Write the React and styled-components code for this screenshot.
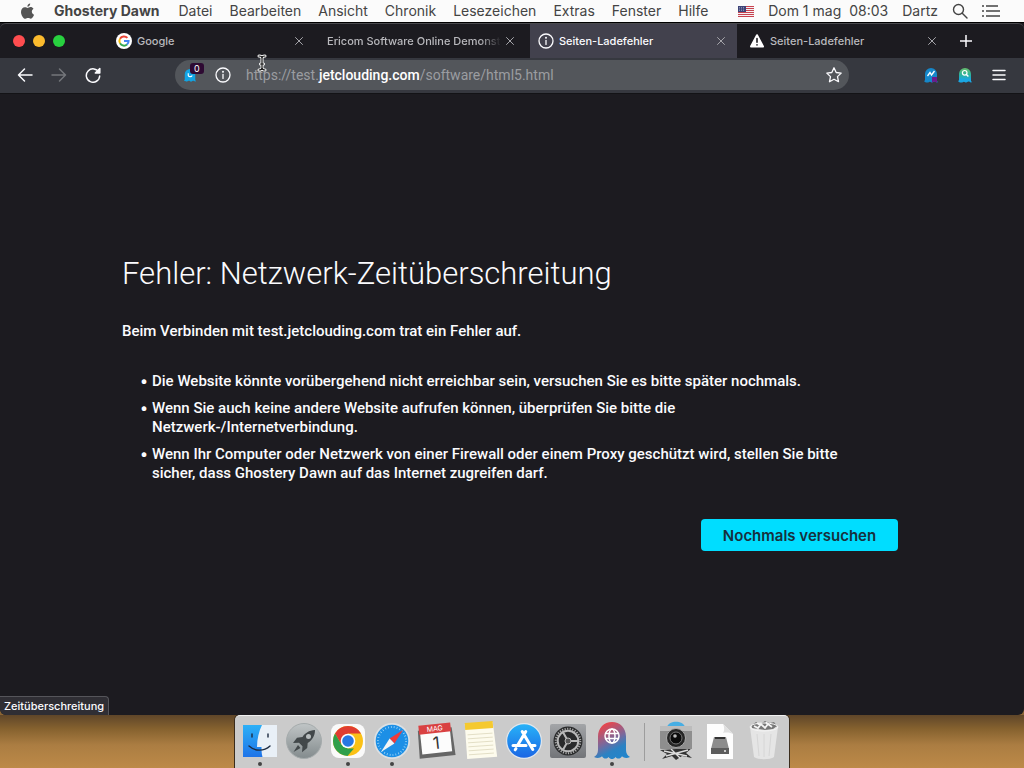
import React from "react";
import styled, { createGlobalStyle } from "styled-components";

const Global = createGlobalStyle`
  * { box-sizing: border-box; }
  body { margin: 0; background: #8a6434; font-family: Inter, "Liberation Sans", sans-serif; }
  button, input { font: inherit; color: inherit; }
  button { background: none; border: 0; padding: 0; display: flex; align-items: center; justify-content: center; cursor: pointer; }
  svg { display: block; flex: none; }
`;

const Desktop = styled.div`
  min-height: 100vh;
  display: flex;
  flex-direction: column;
`;

const MenuBar = styled.header`
  height: 22px;
  padding: 0 24px 0 20px;
  display: flex;
  align-items: center;
  justify-content: space-between;
  background: #fbfbfb;
  color: #444;
  font-size: 14px;
  line-height: 20px;
  white-space: nowrap;
`;

const MenuGroup = styled.nav`
  display: flex;
  align-items: center;
  gap: ${(p) => p.$gap}px;
`;

const MenuItem = styled.button`
  && { font-weight: ${(p) => (p.$bold ? 700 : 400)}; }
`;

const Browser = styled.main`
  position: relative;
  flex: 1;
  display: flex;
  flex-direction: column;
  border-top: 1px solid #000;
  border-radius: 0 0 6px 6px;
  background: #1c1b20;
  color: #fbfbfe;
`;

const TabStrip = styled.div`
  height: 35px;
  display: flex;
  align-items: stretch;
  border-top: 1px solid #4a4a4e;
  border-radius: 6px 6px 0 0;
`;

const TrafficLights = styled.div`
  width: 107px;
  flex: none;
  padding-left: 13px;
  display: flex;
  align-items: center;
  gap: 8px;
`;

const Light = styled.button`
  && { width: 12px; height: 12px; border-radius: 50%; background: ${(p) => p.$color}; }
`;

const Tab = styled.div`
  flex: 0 1 207px;
  min-width: 0;
  margin: 0 3px 0 1px;
  padding: 0 12px 0 8px;
  display: flex;
  align-items: center;
  gap: 5px;
  font-size: 11px;
  font-weight: 500;
  color: ${(p) => (p.$active ? "#fbfbfe" : "#b9b9bd")};
  background: ${(p) => (p.$active ? "#42414d" : "transparent")};
`;

const TabTitle = styled.span`
  flex: 1;
  overflow: hidden;
  white-space: nowrap;
  mask-image: ${(p) => (p.$fade ? "linear-gradient(90deg, #000 88%, transparent)" : "none")};
`;

const TabClose = styled.button`
  && { color: #a5a5aa; }
`;

const NewTab = styled.button`
  width: 30px;
`;

const Toolbar = styled.div`
  height: 35px;
  padding: 0 17px 1px;
  display: flex;
  align-items: center;
  background: #36383f;
`;

const NavButtons = styled.div`
  width: 158px;
  flex: none;
  display: flex;
  align-items: center;
  gap: 18px;
`;

const NavButton = styled.button`
  && { color: ${(p) => (p.disabled ? "#74767b" : "#fbfbfe")}; }
`;

const AddressBar = styled.div`
  flex: 1;
  height: 30px;
  padding: 0 7px 0 5px;
  display: flex;
  align-items: center;
  gap: 15px;
  border-radius: 15px;
  background: #53565b;
`;

const Shield = styled.button`
  position: relative;
  width: 20px;
  height: 30px;
`;

const Badge = styled.span`
  position: absolute;
  left: 10px;
  top: 3px;
  padding: 0 4px;
  border-radius: 3px;
  background: #2e0a33;
  color: #fff;
  font-size: 9px;
  line-height: 11px;
`;

const UrlField = styled.label`
  flex: 1;
  display: grid;
  align-items: center;
  font-family: Roboto, Inter, sans-serif;
  font-size: 14px;
  line-height: 20px;
  > * { grid-area: 1 / 1; }
`;

const UrlInput = styled.input`
  && { color: transparent; caret-color: #fff; }
  width: 100%;
  border: 0;
  padding: 0;
  outline: 0;
  background: none;
`;

const UrlText = styled.span`
  pointer-events: none;
  color: #9b9da1;
  b { color: #fff; font-weight: 500; }
`;

const Extensions = styled.div`
  width: 158px;
  flex: none;
  display: flex;
  align-items: center;
  justify-content: flex-end;
  gap: 18px;
`;

const Page = styled.section`
  flex: 1;
  display: flex;
  flex-direction: column;
  justify-content: center;
  padding: 24px 126px 28px 122px;
  border-top: 1px solid #131316;
  font-family: Roboto, Inter, sans-serif;
  font-size: 15px;
  font-weight: 500;
  line-height: 19px;
`;

const Title = styled.h1`
  margin: 0 0 28px;
  font-size: 31px;
  font-weight: 300;
  line-height: 40px;
`;

const Lead = styled.p`
  margin: 0 0 30px;
`;

const Hints = styled.ul`
  margin: 0 0 36px;
  padding: 0 30px;
  display: grid;
  gap: 7px;
  list-style-type: "•\\00a0";
  li::marker { font-family: Inter, sans-serif; }
`;

const Retry = styled.button`
  && {
    align-self: flex-end;
    width: 197px;
    height: 32px;
    border-radius: 4px;
    background: #00ddff;
    color: #17303d;
    font-family: Inter, sans-serif;
    font-weight: 600;
  }
`;

const Status = styled.output`
  position: absolute;
  left: 0;
  bottom: 0;
  padding: 0 4px;
  border: 1px solid #55555a;
  border-width: 1px 1px 0 0;
  border-radius: 0 4px 0 6px;
  background: #2f2e34;
  font-size: 11px;
  font-weight: 500;
  line-height: 18px;
`;

const Pointer = styled.svg`
  position: absolute;
  left: 256px;
  top: 31px;
  pointer-events: none;
`;

const Shelf = styled.footer`
  display: flex;
  justify-content: center;
  background: linear-gradient(#5f4629, #86622f 14px, #ab7d42 30px, #bd8a48);
`;

const DockBar = styled.div`
  height: 53px;
  padding: 7px 7px 0;
  display: flex;
  gap: 8px;
  border-top: 1px solid #f1f1f1;
  border-radius: 5px 5px 0 0;
  background: #cbcbcb;
  box-shadow: 0 0 0 1px #3a2c1c;
`;

const DockItem = styled.button`
  && { width: 36px; flex-direction: column; justify-content: flex-start; gap: 3px; }
  svg { overflow: visible; }
`;

const Dot = styled.span`
  width: 4px;
  height: 4px;
  border-radius: 50%;
  background: #444;
`;

const Divider = styled.span`
  width: 1px;
  height: 38px;
  margin: 0 5px 0 6px;
  background: #9d9d9d;
`;

const Line = ({ size = 16, w = 1.5, children, ...rest }) => (
  <svg width={size} height={size} viewBox="0 0 16 16" fill="none" stroke="currentColor" strokeWidth={w} strokeLinecap="round" strokeLinejoin="round" {...rest}>
    {children}
  </svg>
);

const AppleLogo = () => (
  <svg width="15" height="17" viewBox="0 0 15 17" fill="#555">
    <path d="M10.2 0.6c.1 1.7-1.3 3.2-2.8 3.2C7.2 2.200 8.600.800 10.200.600z" />
    <path d="M7.600 4.900c.7 0 1.500-.8 2.900-.8 1.200 0 2.300.6 3 1.600-2.500 1.500-2 5 .6 6-.6 1.600-1.900 4-3.300 4-1 0-1.500-.6-2.700-.6s-1.700.6-2.700.6C3.300 15.700 1 12 1 8.900c0-3 1.900-4.700 3.800-4.700 1.300 0 2.100.7 2.800.7z" />
  </svg>
);

const Flag = () => (
  <svg width="16" height="11" viewBox="0 0 16 11">
    <path fill="#f4f0f2" d="M0 0h16v11H0z" />
    <path stroke="#c8424f" d="M0 .5h16M0 2.500h16M0 4.500h16M0 6.500h16M0 8.500h16M0 10.500h16" />
    <path fill="#3d4478" d="M0 0h8v6H0z" />
    <path stroke="#a8acc9" strokeDasharray="1 1" strokeWidth=".7" d="M1 1.500h6M1 3h6M1 4.500h6" />
  </svg>
);

const GoogleIcon = () => (
  <svg width="16" height="16" viewBox="0 0 16 16">
    <circle cx="8" cy="8" r="8" fill="#fff" />
    <g fill="none" strokeWidth="2">
      <path stroke="#ea4335" d="M4 5.700A4.600 4.600 0 0 1 11.400 4.900" />
      <path stroke="#fbbc05" d="M4 5.700a4.600 4.600 0 0 0 0 4.600" />
      <path stroke="#34a853" d="M4 10.300a4.600 4.600 0 0 0 7 1.200" />
      <path stroke="#4285f4" d="M8 8h4.600a4.600 4.600 0 0 1-1.600 3.500" />
    </g>
  </svg>
);

const InfoIcon = () => (
  <Line w="1.300"><circle cx="8" cy="8" r="7" /><path d="M8 7.400v4" /><circle cx="8" cy="4.800" r=".4" fill="currentColor" /></Line>
);

const WarnIcon = () => (
  <svg width="16" height="16" viewBox="0 0 16 16">
    <path fill="#fff" stroke="#fff" strokeWidth="2" strokeLinejoin="round" d="M8 2.200 14 13.500H2z" />
    <path stroke="#1c1b20" strokeWidth="1.600" strokeLinecap="round" d="M8 5.500v3.800M8 11.800v.1" />
  </svg>
);

const CloseIcon = () => <Line size={8} w="2"><path d="M1 1l14 14M15 1 1 15" /></Line>;

const GhostShape = "M2 14V7a6 6 0 0 1 12 0v7c1 .8 1 1.500 0 1.400-1.200-.1-1.600-.8-2.600-.8s-1.200 1-2.200 1-1.300-.9-2.300-.9-1.300.9-2.500.8c-1.300 0-1.700-.4-2.400-.6-.8-.2-1-.7 0-1.900z";

const InsightGhost = () => (
  <svg width="16" height="16" viewBox="0 0 16 16">
    <path fill="#1687c9" d={GhostShape} />
    <path fill="#6d1a8c" d="M9 10h5v5.400c-1.500 0-2-.8-3-.8s-1 .9-2 .9z" />
    <path fill="none" stroke="#fff" strokeWidth="1.300" d="M4.500 9 7 5.500 8.500 8 11.500 4" />
  </svg>
);

const SearchGhost = () => (
  <svg width="16" height="16" viewBox="0 0 16 16">
    <defs><linearGradient id="sg" x2="0" y2="1"><stop stopColor="#68bd6c" /><stop offset=".45" stopColor="#2db39a" /><stop offset=".8" stopColor="#1aa7e4" /></linearGradient></defs>
    <path fill="url(#sg)" d={GhostShape} />
    <circle cx="7.700" cy="5.800" r="2.300" fill="none" stroke="#fff" strokeWidth="1.200" />
    <path stroke="#fff" strokeWidth="1.400" d="m9.400 7.500 2 2" />
  </svg>
);

const ShieldGhost = () => (
  <svg width="14" height="16" viewBox="0 0 16 16">
    <path fill="#12a4e3" d={GhostShape} />
    <path fill="none" stroke="#fff" strokeWidth="1.300" d="M6 6v2.500a2.500 2.500 0 0 0 4.500 0" />
  </svg>
);

const Finder = () => (
  <svg width="36" height="36" viewBox="0 0 36 36">
    <defs><linearGradient id="fi" x2="0" y2="1"><stop stopColor="#2bb0f7" /><stop offset="1" stopColor="#1f74e8" /></linearGradient></defs>
    <path fill="url(#fi)" d="M1 2h34v32H1z" />
    <path fill="#e9f0f7" d="M20 2h15v32H20.500c-.8-3-1-6-1-10H15C15 16 17 8 20 2z" />
    <path fill="none" stroke="#1d2b40" strokeWidth="1.400" strokeLinecap="round" d="M10 11v3M26 11v3M7 23c6 5.500 15 5.500 21 0" />
  </svg>
);

const Launchpad = () => (
  <svg width="36" height="36" viewBox="0 0 36 36">
    <defs><linearGradient id="lp" x2="0" y2="1"><stop stopColor="#c0c5c6" /><stop offset="1" stopColor="#838b8d" /></linearGradient></defs>
    <circle cx="18" cy="18" r="17.500" fill="url(#lp)" stroke="#a5abac" />
    <path fill="#42484a" d="M29 7c-6 .4-10 3-12.500 7l-5.500.8L7 20l6-.2 3.500 3.400-.5 6 5.200-4.200.5-5C26 17.500 29 13 29 7zM12 22l-4.500 7L14.500 25z" />
    <circle cx="22.500" cy="13.500" r="2.500" fill="#b8bebf" />
  </svg>
);

const Chrome = () => (
  <svg width="36" height="36" viewBox="0 0 36 36">
    <rect x="1" y="1" width="34" height="34" rx="8" fill="#fafafa" />
    <circle cx="18" cy="18" r="15" fill="#fbc116" />
    <path fill="#e03c31" d="M5 10.500a15 15 0 0 1 26 0H18l-6.500 11.200z" />
    <path fill="#2f9f4b" d="M5 10.500 11.500 21.700 18 25.500h6L17.500 33A15 15 0 0 1 5 10.500z" />
    <circle cx="18" cy="18" r="7.300" fill="#fff" /><circle cx="18" cy="18" r="5.800" fill="#2877e3" />
  </svg>
);

const Safari = () => (
  <svg width="36" height="36" viewBox="0 0 36 36">
    <circle cx="18" cy="18" r="18" fill="#dce0e3" /><circle cx="18" cy="18" r="16.300" fill="#1c8fe6" />
    <circle cx="18" cy="18" r="14" fill="none" stroke="#a7dcfa" strokeWidth="2" strokeDasharray=".7 2.230" />
    <path fill="#ef3b3a" d="m29 7-8.600 13.400-4.800-4.800z" /><path fill="#f2f4f5" d="m7 29 13.400-8.600-4.800-4.800z" />
  </svg>
);

const DateText = styled.text`
  font-family: Inter, sans-serif;
  text-anchor: middle;
`;

const Calendar = () => (
  <svg width="36" height="36" viewBox="0 0 36 36">
    <g transform="rotate(-6 18 18)">
      <path fill="#666" d="M1 6h34l1 28H0z" />
      <path fill="#fcfcfc" d="M3 2h30v28H3z" /><path fill="#d94142" d="M2 1h32v9H2z" />
      <DateText x="18" y="8" fontSize="7" fill="#fff">MAG</DateText>
      <DateText x="18" y="26" fontSize="17" fill="#333">1</DateText>
    </g>
  </svg>
);

const Notes = () => (
  <svg width="36" height="36" viewBox="0 0 36 36">
    <g transform="rotate(-4 18 18)">
      <path fill="#fdfbed" d="M4 0h28l2 35H4z" /><path fill="#f5c92f" d="M4-1h28v7H4z" />
      <path stroke="#ddd8bd" strokeWidth=".8" d="M6 11h25M6 15h25M6 19h25M6 23h25M6 27h25M6 31h25" />
    </g>
  </svg>
);

const AppStore = () => (
  <svg width="36" height="36" viewBox="0 0 36 36">
    <defs><linearGradient id="as" x2="0" y2="1"><stop stopColor="#27b2f8" /><stop offset="1" stopColor="#1b66e4" /></linearGradient></defs>
    <circle cx="18" cy="18" r="18" fill="#e1e7ed" /><circle cx="18" cy="18" r="16.800" fill="url(#as)" />
    <path fill="none" stroke="#fff" strokeWidth="3" strokeLinecap="round" d="M19.800 8.500 11.500 22.500M16.200 8.500l10.600 18M7 22.500h13M26 22.500h3M10 25.500l-.8 1.300" />
  </svg>
);

const Settings = () => (
  <svg width="36" height="36" viewBox="0 0 36 36">
    <defs><linearGradient id="st" x2="0" y2="1"><stop stopColor="#a3a5a8" /><stop offset="1" stopColor="#727478" /></linearGradient></defs>
    <rect y="1" width="36" height="34" rx="2" fill="url(#st)" />
    <circle cx="18" cy="18" r="14.500" fill="#292a2b" />
    <circle cx="18" cy="18" r="12.300" fill="none" stroke="#aaa" strokeWidth="2" strokeDasharray="1.200 1.376" />
    <circle cx="18" cy="18" r="10.300" fill="none" stroke="#b8b8b8" strokeWidth="2" />
    <path fill="none" stroke="#b8b8b8" strokeWidth="2" d="M18 18h10M18 18l-5-8.700M18 18l-5 8.700" />
    <circle cx="18" cy="18" r="3" fill="#555" stroke="#b8b8b8" />
  </svg>
);

const Ghostery = () => (
  <svg width="36" height="36" viewBox="0 0 36 36">
    <defs><linearGradient id="gh" x1=".2" x2=".7" y2="1"><stop offset=".1" stopColor="#e5474f" /><stop offset=".5" stopColor="#7c689b" /><stop offset=".75" stopColor="#2b82c3" /><stop offset="1" stopColor="#2385cb" /></linearGradient></defs>
    <path fill="url(#gh)" d="M4 13.500C4 5 10-1 18-1s14 6 14 14.500V27c0 3.500 1.500 5.500 4 7-3.500 1.500-6 1-8-.8-1.500 2.600-4.500 3.200-6.500.8-2 2.800-5 2.800-7 0-2 2.400-5 1.800-6.500-.8-2 1.800-4.500 2.300-8 .8 2.500-1.500 4-3.500 4-7z" />
    <g fill="none" stroke="#fff" strokeWidth="1.500"><circle cx="18" cy="13" r="7" /><ellipse cx="18" cy="13" rx="3" ry="7" /><path d="M11.500 10.500h13M11.500 15.500h13" /></g>
  </svg>
);

const Camera = () => (
  <svg width="36" height="36" viewBox="0 0 36 36">
    <path fill="#46aee4" d="M9 4c2-7 16-7 18 0z" />
    <path fill="#333" d="m2 27 32-2-6 5 6 5-10-2-6 4-4-4-10 3 5-5z" />
    <path stroke="#ddd" strokeWidth="1.300" d="m6 28 23 5M30 27 8 33M13 26l9 9" />
    <rect x="2" y="3" width="32" height="23" rx="1" fill="#8e8e8e" /><path fill="#bcbcbc" d="M2 3h32v5H2z" />
    <circle cx="18" cy="15" r="9.500" fill="#262626" stroke="#aaa" /><circle cx="18" cy="15" r="6" fill="#0c0c0c" stroke="#777" /><circle cx="17" cy="13" r="1.800" fill="#bbb" />
  </svg>
);

const DiskFile = () => (
  <svg width="36" height="36" viewBox="0 0 36 36">
    <path fill="#fdfdfd" d="M5 1h16l10 10v25H5z" /><path fill="#e0e0e0" d="M21 1c2 4 1 8 0 9 4-1 8 0 10 1z" />
    <path fill="#8c8c8c" d="M12 14h12l3 12H9z" /><path fill="#5c5c5c" d="M9 25h18v6H9z" /><path fill="#333" d="M13 14h10v2H13z" />
    <circle cx="23" cy="28" r="1" fill="#eee" />
  </svg>
);

const Trash = () => (
  <svg width="36" height="36" viewBox="0 0 36 36">
    <path fill="#e8e8e8" fillOpacity=".9" d="M4 4h28l-4 30c-4 3-16 3-20 0z" />
    <path fill="#777" d="m6 2 4-3 4 2 5-3 5 2 4-1 3 4-4 3-8 1-7-1-6-1z" />
    <path stroke="#f4f4f4" strokeWidth="1.800" d="m8 3 4 2 3-4 4 4 3-4 4 3M11 0l3 2M20-1l2 3" fill="none" />
    <path stroke="#d6d6d6" d="m11 11 2 22M18 11v23M25 11l-2 22" />
    <ellipse cx="18" cy="4" rx="14" ry="4" fill="none" stroke="#f5f5f5" />
  </svg>
);

const MENUS = ["Datei", "Bearbeiten", "Ansicht", "Chronik", "Lesezeichen", "Extras", "Fenster", "Hilfe"];

const TABS = [
  { title: "Google", Icon: GoogleIcon },
  { title: "Ericom Software Online Demonstration", fade: true },
  { title: "Seiten-Ladefehler", Icon: InfoIcon, active: true },
  { title: "Seiten-Ladefehler", Icon: WarnIcon },
];

const HINTS = [
  "Die Website könnte vorübergehend nicht erreichbar sein, versuchen Sie es bitte später nochmals.",
  "Wenn Sie auch keine andere Website aufrufen können, überprüfen Sie bitte die Netzwerk-/Internetverbindung.",
  "Wenn Ihr Computer oder Netzwerk von einer Firewall oder einem Proxy geschützt wird, stellen Sie bitte sicher, dass Ghostery Dawn auf das Internet zugreifen darf.",
];

const APPS = [
  { name: "Finder", Icon: Finder, open: true },
  { name: "Launchpad", Icon: Launchpad },
  { name: "Chrome", Icon: Chrome, open: true },
  { name: "Safari", Icon: Safari, open: true },
  { name: "Kalender", Icon: Calendar },
  { name: "Notizen", Icon: Notes },
  { name: "App Store", Icon: AppStore },
  { name: "Einstellungen", Icon: Settings },
  { name: "Ghostery Dawn", Icon: Ghostery, open: true },
];

const TOOLS = [
  { name: "Bildschirmfoto", Icon: Camera },
  { name: "Image", Icon: DiskFile },
  { name: "Papierkorb", Icon: Trash },
];

const DockButton = ({ name, Icon, open }) => (
  <DockItem aria-label={name}><Icon />{open && <Dot />}</DockItem>
);

export default function App() {
  return (
    <Desktop>
      <Global />
      <MenuBar>
        <MenuGroup $gap={19}>
          <MenuItem aria-label="Apple"><AppleLogo /></MenuItem>
          <MenuItem $bold>Ghostery Dawn</MenuItem>
          <MenuGroup $gap={17}>
            {MENUS.map((m) => <MenuItem key={m}>{m}</MenuItem>)}
          </MenuGroup>
        </MenuGroup>
        <MenuGroup $gap={14}>
          <MenuItem aria-label="Tastatur"><Flag /></MenuItem>
          <MenuGroup $gap={8}><time>Dom 1 mag</time><time>08:03</time></MenuGroup>
          <MenuItem>Dartz</MenuItem>
          <MenuItem aria-label="Suchen"><Line w="1.400"><circle cx="6.500" cy="6.500" r="5" /><path d="m10.500 10.500 4.500 4.500" /></Line></MenuItem>
          <MenuItem aria-label="Mitteilungen">
            <svg width="18" height="12" viewBox="0 0 18 12" stroke="#444" strokeWidth="1.500"><path d="M0 1h2M0 6h2M0 11h2M4 1h12M4 6h14M4 11h14" /></svg>
          </MenuItem>
        </MenuGroup>
      </MenuBar>

      <Browser>
        <TabStrip>
          <TrafficLights>
            <Light $color="#ff4d4f" aria-label="Schließen" />
            <Light $color="#fcbb2d" aria-label="Minimieren" />
            <Light $color="#28d13f" aria-label="Maximieren" />
          </TrafficLights>
          {TABS.map(({ title, Icon, active, fade }, i) => (
            <Tab key={i} $active={active}>
              {Icon && <Icon />}
              <TabTitle $fade={fade}>{title}</TabTitle>
              <TabClose aria-label="Tab schließen"><CloseIcon /></TabClose>
            </Tab>
          ))}
          <NewTab aria-label="Neuer Tab"><Line size={12} w="2"><path d="M8 0v16M0 8h16" /></Line></NewTab>
        </TabStrip>

        <Toolbar>
          <NavButtons>
            <NavButton aria-label="Zurück"><Line><path d="M15 8H1.500M7.500 2 1.500 8l6 6" /></Line></NavButton>
            <NavButton disabled aria-label="Vor"><Line><path d="M1 8h13.500M8.500 2l6 6-6 6" /></Line></NavButton>
            <NavButton aria-label="Neu laden"><Line><path d="M14 5.500A6.700 6.700 0 1 0 14.700 9" /><path fill="currentColor" d="M14.800 1.500v4.500h-4.500z" /></Line></NavButton>
          </NavButtons>
          <AddressBar>
            <Shield aria-label="Ghostery"><ShieldGhost /><Badge>0</Badge></Shield>
            <button aria-label="Information"><InfoIcon /></button>
            <UrlField>
              <UrlInput aria-label="Adresse" defaultValue="https://test.jetclouding.com/software/html5.html" />
              <UrlText aria-hidden="true">https://test.<b>jetclouding.com</b>/software/html5.html</UrlText>
            </UrlField>
            <button aria-label="Lesezeichen"><Line w="1.300"><path d="m8 .8 2.200 4.700 5 .6-3.700 3.500 1 5.100L8 12.200l-4.500 2.500 1-5.100L.800 6.100l5-.6z" /></Line></button>
          </AddressBar>
          <Extensions>
            <button aria-label="Insights"><InsightGhost /></button>
            <button aria-label="Private Suche"><SearchGhost /></button>
            <button aria-label="Menü"><Line><path d="M2 3.500h12M2 8h12M2 12.500h12" /></Line></button>
          </Extensions>
        </Toolbar>

        <Page>
          <Title>Fehler: Netzwerk-Zeitüberschreitung</Title>
          <Lead>Beim Verbinden mit test.jetclouding.com trat ein Fehler auf.</Lead>
          <Hints>{HINTS.map((h) => <li key={h}>{h}</li>)}</Hints>
          <Retry>Nochmals versuchen</Retry>
        </Page>
        <Status>Zeitüberschreitung</Status>
        <Pointer width="12" height="18" viewBox="0 0 12 18" fill="none" strokeLinecap="round">
          <path stroke="#fff" strokeWidth="3" d="M3 2c2 0 3 .5 3 2v10c0 1.500-1 2-3 2M9 2C7 2 6 2.500 6 4M9 16c-2 0-3-.5-3-2M4.500 10h3" />
          <path stroke="#111" strokeWidth="1.200" d="M3 2c2 0 3 .5 3 2v10c0 1.500-1 2-3 2M9 2C7 2 6 2.500 6 4M9 16c-2 0-3-.5-3-2M4.500 10h3" />
        </Pointer>
      </Browser>

      <Shelf>
        <DockBar>
          {APPS.map((a) => <DockButton key={a.name} {...a} />)}
          <Divider />
          {TOOLS.map((a) => <DockButton key={a.name} {...a} />)}
        </DockBar>
      </Shelf>
    </Desktop>
  );
}
